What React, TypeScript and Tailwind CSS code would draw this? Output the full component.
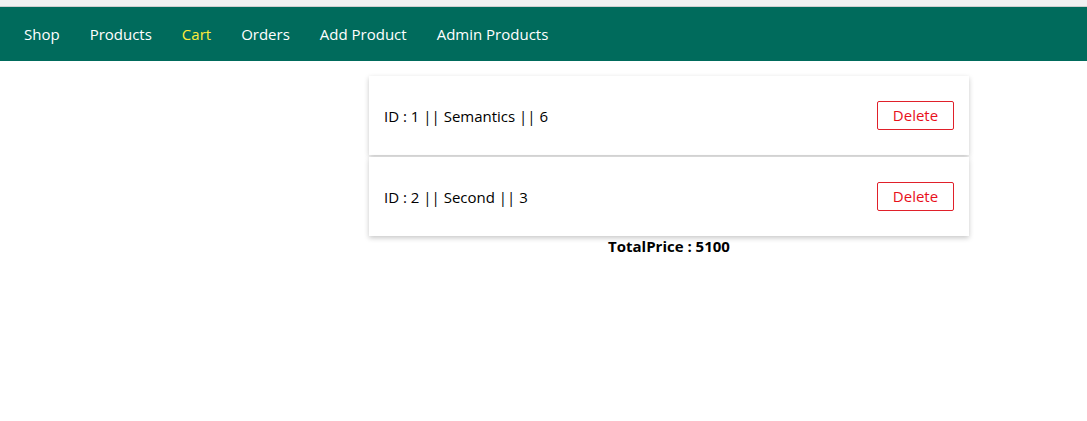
const links = ['Shop', 'Products', 'Cart', 'Orders', 'Add Product', 'Admin Products'];

const items = [
  { id: 1, title: 'Semantics', qty: 6 },
  { id: 2, title: 'Second', qty: 3 },
];

export default function App() {
  return (
    <div className="min-h-[421px] bg-white text-[15px] text-black" style={{ fontFamily: '"Open Sans", sans-serif' }}>
      <div className="h-[7px] bg-[#f1f1f1] border-b border-[#cfcfcf]" />
      <nav className="h-[54px] bg-[#006b5c] flex items-center pl-[24px] gap-[30px]">
        {links.map((l) => (
          <a key={l} className={l === 'Cart' ? 'text-[#ffeb3b]' : 'text-white'}>
            {l}
          </a>
        ))}
      </nav>
      <div className="ml-[369px] w-[600px] pt-[15px]">
        <ul className="flex flex-col gap-[2px]">
          {items.map((it) => (
            <li
              key={it.id}
              className="h-[79px] flex items-center justify-between pl-[15px] pr-[15px] bg-white shadow-[0_2px_5px_rgba(0,0,0,0.22)]"
            >
              <span className="pt-[2px]">
                ID : {it.id} || {it.title} || {it.qty}
              </span>
              <button className="w-[77px] h-[29px] border border-[#e0202a] rounded-[2px] text-[#e8101c] text-[15px]">
                Delete
              </button>
            </li>
          ))}
        </ul>
        <p className="text-center font-bold text-[15px] leading-[20px]">TotalPrice : 5100</p>
      </div>
    </div>
  );
}
